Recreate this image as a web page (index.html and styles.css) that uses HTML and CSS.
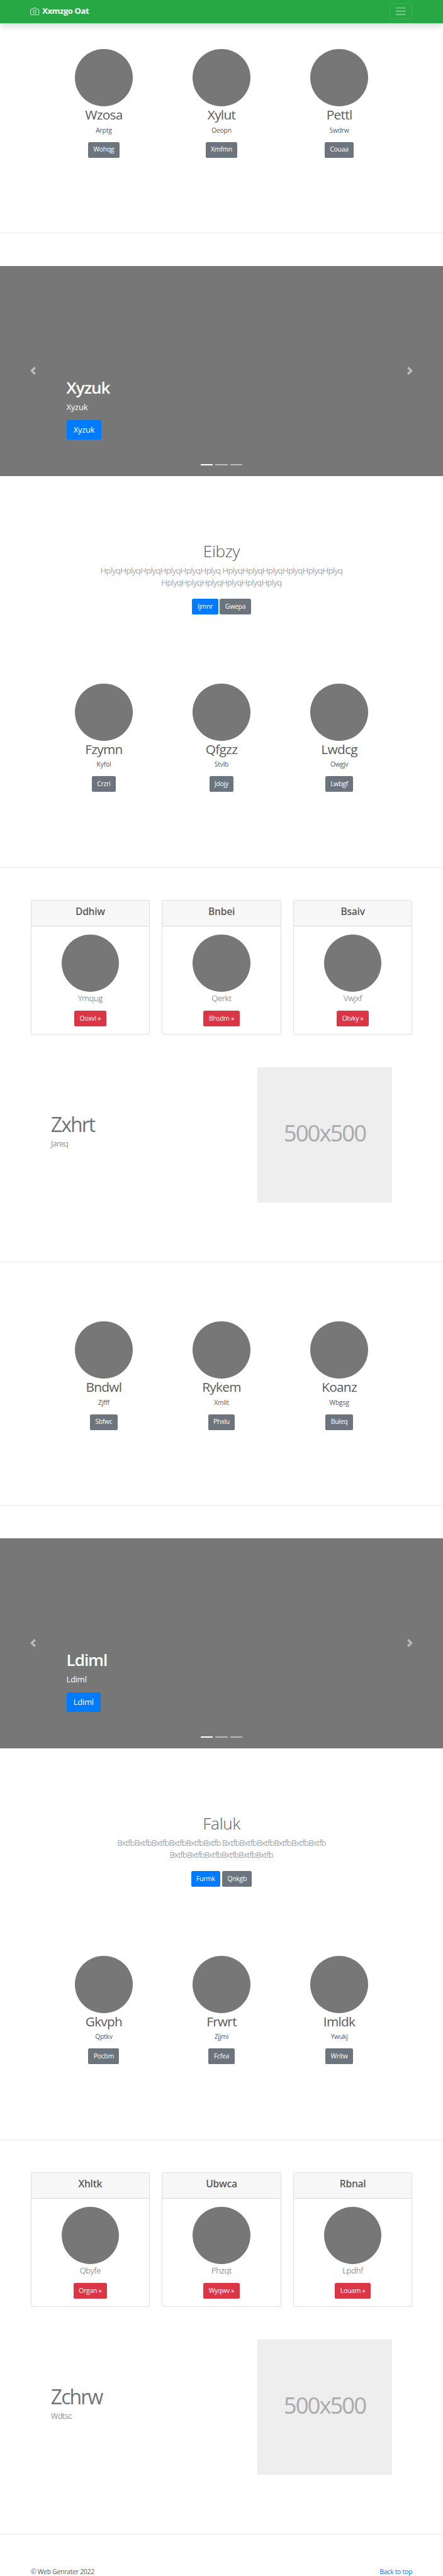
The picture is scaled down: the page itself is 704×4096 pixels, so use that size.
FILE: index.html
```html
<!DOCTYPE html>
<html lang="en">
<head>
<meta charset="utf-8">
<title>Xxmzgo Oat</title>
<link rel="stylesheet" href="styles.css">
</head>
<body>
<header class="navbar">
  <a class="brand"><svg class="brand-icon" viewBox="0 0 24 24" fill="none" stroke="currentColor" stroke-width="1.5" stroke-linejoin="round"><path d="M23 19a2 2 0 0 1-2 2H3a2 2 0 0 1-2-2V8a2 2 0 0 1 2-2h4l2-3h6l2 3h4a2 2 0 0 1 2 2z"/><circle cx="12" cy="13" r="4"/></svg><span>Xxmzgo Oat</span></a>
  <span class="toggler"><svg viewBox="0 0 30 30" stroke="rgba(255,255,255,.5)" stroke-width="2"><path d="M3 7h24M3 15h24M3 23h24"/></svg></span>
</header>

<main>
<section class="marketing first">
  <div class="person"><span class="disc"></span><h2>Wzosa</h2><p>Arptg</p><a class="btn grey">Wohqg</a></div>
  <div class="person"><span class="disc"></span><h2>Xylut</h2><p>Oeopn</p><a class="btn grey">Xmfmn</a></div>
  <div class="person"><span class="disc"></span><h2>Pettl</h2><p>Swdrw</p><a class="btn grey">Couaa</a></div>
</section>
<hr>

<section class="carousel">
  <svg class="arrow prev" viewBox="0 0 8 8" fill="#fff"><path d="M5.25 0l-4 4 4 4 1.5-1.5L4.25 4l2.5-2.5L5.25 0z"/></svg>
  <div class="caption"><h1>Xyzuk</h1><p>Xyzuk</p><a class="btn blue large">Xyzuk</a></div>
  <svg class="arrow next" viewBox="0 0 8 8" fill="#fff"><path d="M2.75 0l-1.5 1.5L3.75 4l-2.5 2.5L2.75 8l4-4-4-4z"/></svg>
  <div class="indicators"><i class="on"></i><i></i><i></i></div>
</section>

<section class="intro">
  <h1>Eibzy</h1>
  <p class="lead lead-a">HplyqHplyqHplyqHplyqHplyqHplyq HplyqHplyqHplyqHplyqHplyqHplyq<br>HplyqHplyqHplyqHplyqHplyqHplyq</p>
  <div class="actions"><a class="btn blue">Ijmnr</a><a class="btn grey">Gwepa</a></div>
</section>

<section class="marketing">
  <div class="person"><span class="disc"></span><h2>Fzymn</h2><p>Kyfol</p><a class="btn grey">Crzri</a></div>
  <div class="person"><span class="disc"></span><h2>Qfgzz</h2><p>Stvlb</p><a class="btn grey">Jdojy</a></div>
  <div class="person"><span class="disc"></span><h2>Lwdcg</h2><p>Owgjv</p><a class="btn grey">Lwbgf</a></div>
</section>
<hr>

<section class="deck">
  <article class="card"><h4>Ddhiw</h4><span class="disc"></span><p>Ymqug</p><a class="btn red">Ooxvl »</a></article>
  <article class="card"><h4>Bnbei</h4><span class="disc"></span><p>Qerkt</p><a class="btn red">Bhsdm »</a></article>
  <article class="card"><h4>Bsaiv</h4><span class="disc"></span><p>Vwjxf</p><a class="btn red">Otvky »</a></article>
</section>

<section class="feature">
  <div class="feature-text"><h2>Zxhrt</h2><p>Jareq</p></div>
  <div class="placeholder">500x500</div>
</section>
<hr>

<section class="marketing spaced">
  <div class="person"><span class="disc"></span><h2>Bndwl</h2><p>Zjfff</p><a class="btn grey">Sbfwc</a></div>
  <div class="person"><span class="disc"></span><h2>Rykem</h2><p>Xmlit</p><a class="btn grey">Phxlu</a></div>
  <div class="person"><span class="disc"></span><h2>Koanz</h2><p>Wbgsg</p><a class="btn grey">Buleq</a></div>
</section>
<hr>

<section class="carousel">
  <svg class="arrow prev" viewBox="0 0 8 8" fill="#fff"><path d="M5.25 0l-4 4 4 4 1.5-1.5L4.25 4l2.5-2.5L5.25 0z"/></svg>
  <div class="caption"><h1>Ldiml</h1><p>Ldiml</p><a class="btn blue large">Ldiml</a></div>
  <svg class="arrow next" viewBox="0 0 8 8" fill="#fff"><path d="M2.75 0l-1.5 1.5L3.75 4l-2.5 2.5L2.75 8l4-4-4-4z"/></svg>
  <div class="indicators"><i class="on"></i><i></i><i></i></div>
</section>

<section class="intro">
  <h1>Faluk</h1>
  <p class="lead lead-b">BxtfbBxtfbBxtfbBxtfbBxtfbBxtfb BxtfbBxtfbBxtfbBxtfbBxtfbBxtfb<br>BxtfbBxtfbBxtfbBxtfbBxtfbBxtfb</p>
  <div class="actions"><a class="btn blue">Furmk</a><a class="btn grey">Qnkgb</a></div>
</section>

<section class="marketing">
  <div class="person"><span class="disc"></span><h2>Gkvph</h2><p>Qptkv</p><a class="btn grey">Pocbm</a></div>
  <div class="person"><span class="disc"></span><h2>Frwrt</h2><p>Zjjmi</p><a class="btn grey">Fcfea</a></div>
  <div class="person"><span class="disc"></span><h2>Imldk</h2><p>Ywukj</p><a class="btn grey">Writw</a></div>
</section>
<hr>

<section class="deck">
  <article class="card"><h4>Xhltk</h4><span class="disc"></span><p>Qbyfe</p><a class="btn red">Organ »</a></article>
  <article class="card"><h4>Ubwca</h4><span class="disc"></span><p>Phzqt</p><a class="btn red">Wyqwv »</a></article>
  <article class="card"><h4>Rbnal</h4><span class="disc"></span><p>Lpdhf</p><a class="btn red">Louam »</a></article>
</section>

<section class="feature">
  <div class="feature-text"><h2>Zchrw</h2><p>Wdtsc</p></div>
  <div class="placeholder">500x500</div>
</section>
<hr>
</main>

<footer class="footer"><span>© Web Genrater 2022</span><a>Back to top</a></footer>
</body>
</html>
```
FILE: styles.css
```css
/* 1rem is ten design pixels, scaled for a 704px wide page */
html { font-size: 6.5185px; }
* { box-sizing: border-box; }
body {
  margin: 0;
  height: 4096px;
  overflow: hidden;
  background: #fff;
  color: #5a5a5a;
  font-family: "Open Sans", "Noto Sans", sans-serif;
  font-size: 1.6rem;
  line-height: 2.4rem;
  letter-spacing: -0.025em;
}
h1, h2, h4, p { margin: 0; font-weight: 400; }
svg { display: block; }

.navbar {
  height: 5.6rem;
  padding: 0 7.5rem 0 7.4rem;
  display: flex;
  justify-content: space-between;
  align-items: center;
  background: #28a745;
  color: #fff;
  box-shadow: 0 .8rem 1.6rem rgba(0, 0, 0, .15);
}
.brand { display: flex; align-items: center; gap: .7rem; font-size: 2rem; font-weight: 700; letter-spacing: -0.03em; }
.brand-icon { width: 2.2rem; height: 2.2rem; }
.toggler {
  width: 5.6rem;
  height: 4rem;
  display: flex;
  align-items: center;
  justify-content: center;
  border: 1px solid rgba(255, 255, 255, .1);
  border-radius: .4rem;
}
.toggler svg { width: 3rem; height: 3rem; }

hr { margin: 0 0 calc(8.1rem - 1px); border: 0; border-top: 1px solid rgba(0, 0, 0, .1); }

.disc { display: block; width: 14rem; height: 14rem; border-radius: 50%; background: #777; }

.btn {
  display: flex;
  align-items: center;
  height: 3.8rem;
  padding: 0 1.3rem;
  border-radius: .4rem;
  color: #fff;
  white-space: nowrap;
}
.blue { background: #007bff; }
.grey { background: #6c757d; }
.red { background: #dc3545; }
.large { height: 4.8rem; padding: 0 1.7rem; font-size: 2rem; border-radius: .5rem; }

.marketing { height: 44.8rem; padding: 0 10.95rem; display: grid; grid-template-columns: repeat(3, 1fr); }
.first { margin-top: 6.4rem; }
.spaced { margin-top: 14.45rem; }
.person { display: flex; flex-direction: column; align-items: center; }
.person h2 { margin-top: .16rem; font-size: 3.2rem; line-height: 3.8rem; letter-spacing: -0.035em; }
.person p { margin: .67rem 0 1.62rem; }

.carousel {
  position: relative;
  height: 51.2rem;
  padding: 0 7.1rem;
  display: flex;
  align-items: center;
  background: #777;
  color: #fff;
}
.arrow { width: 2rem; height: 2rem; opacity: .5; }
.caption { flex: 1; align-self: flex-end; padding: 0 7.1rem 8.8rem; display: flex; flex-direction: column; align-items: flex-start; }
.caption h1 { font-size: 4rem; font-weight: 600; line-height: 4.8rem; letter-spacing: -0.04em; }
.caption p { margin: .7rem 0 1.6rem; font-size: 2rem; line-height: 3.2rem; }
.indicators { position: absolute; left: 0; right: 0; bottom: 2.6rem; display: flex; justify-content: center; gap: .6rem; }
.indicators i { width: 3rem; height: .3rem; background: #fff; opacity: .5; }
.indicators .on { opacity: 1; }

.intro { height: 50.6rem; padding-top: 16.05rem; text-align: center; }
.intro h1 { font-size: 4rem; font-weight: 300; line-height: 4.8rem; }
.lead { margin: .8rem 0 2.35rem; color: #6c757d; font-size: 2rem; font-weight: 300; line-height: 3rem; }
.lead-a { letter-spacing: -0.03em; }
.lead-b { letter-spacing: -0.05em; }
.actions { display: flex; justify-content: center; gap: .4rem; }

.deck { padding: 0 7.5rem; display: grid; grid-template-columns: repeat(3, 1fr); gap: 3rem; }
.card {
  height: 32.8rem;
  display: flex;
  flex-direction: column;
  align-items: center;
  border: 1px solid rgba(0, 0, 0, .125);
  border-radius: .4rem;
}
.card h4 {
  width: 100%;
  height: 6.2rem;
  margin-bottom: 2rem;
  border-bottom: 1px solid rgba(0, 0, 0, .125);
  background: #f7f7f7;
  text-align: center;
  font-size: 2.4rem;
  font-weight: 600;
  line-height: 5.5rem;
}
.card p { margin: .1rem 0 1.5rem; font-size: 2rem; font-weight: 300; line-height: 3rem; }

.feature { margin: 8rem 0 14.45rem; padding: 0 12.4rem; display: flex; justify-content: space-between; }
.feature-text { padding-top: 10.8rem; }
.feature-text h2 { color: #6c757d; font-size: 4.9rem; line-height: 6rem; letter-spacing: -0.06em; }
.feature-text p { margin-top: .3rem; font-size: 2rem; font-weight: 300; line-height: 3rem; letter-spacing: -0.04em; }
.placeholder {
  width: 32.9rem;
  height: 32.9rem;
  background: #eee;
  color: #aaa;
  text-align: center;
  font-size: 5.6rem;
  line-height: 32.2rem;
  letter-spacing: -0.055em;
}

.footer { padding: 0 7.5rem; display: flex; justify-content: space-between; }
.footer a { color: #007bff; }
```
